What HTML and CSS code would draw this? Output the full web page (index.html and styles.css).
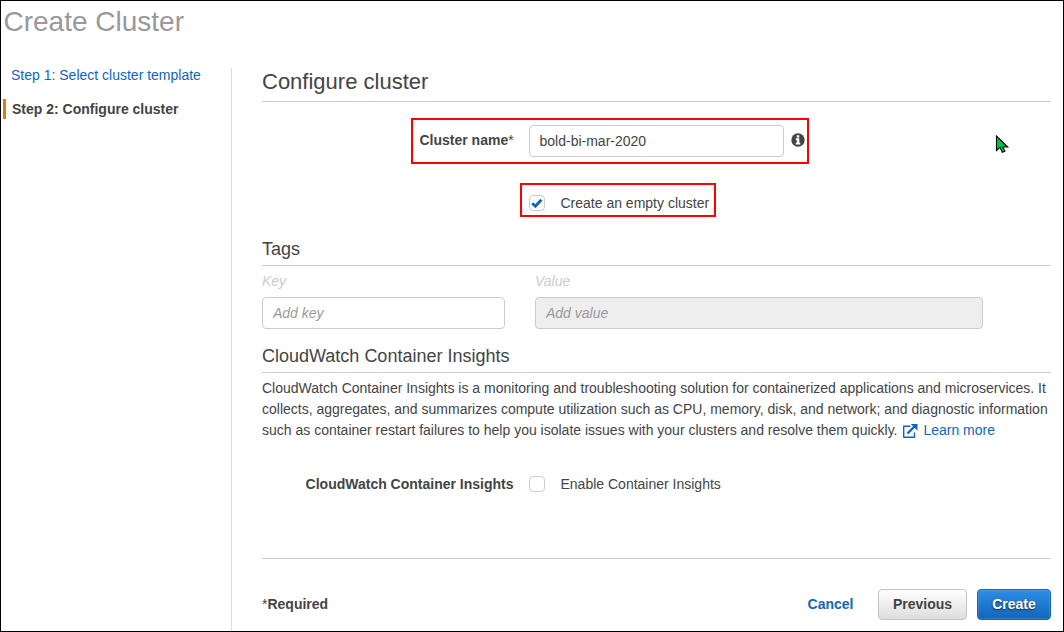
FILE: index.html
```html
<!DOCTYPE html>
<html lang="en">
<head>
<meta charset="utf-8">
<title>Create Cluster</title>
<link rel="stylesheet" href="styles.css">
</head>
<body>
<div class="page">
  <h1 class="page-title">Create Cluster</h1>
  <div class="layout">
    <nav class="steps">
      <a class="step" href="#">Step 1: Select cluster template</a>
      <span class="step step-active">Step 2: Configure cluster</span>
    </nav>
    <main class="content">
      <h2 class="heading">Configure cluster</h2>
      <div class="highlight highlight-name">
        <label class="name-label" for="name"><b>Cluster name</b>*</label>
        <input class="field name-field" id="name" type="text" value="bold-bi-mar-2020">
        <svg class="info" viewBox="0 0 14 14"><circle cx="7" cy="7" r="6.7" fill="#444"/><path d="M5.700 2.200h2.600v2.200H5.700zM4.800 5.300h3.500v4.500h1v1.600H4.800V9.800h1V6.900H4.800z" fill="#fff"/></svg>
      </div>
      <label class="highlight highlight-empty">
        <span class="checkbox"><svg class="check" viewBox="0 0 14 14"><path d="M2.200 7.300l3.200 3 6-6.500" fill="none" stroke="#1166bb" stroke-width="2.900"/></svg></span>
        <span>Create an empty cluster</span>
      </label>
      <h3 class="subheading tags-heading">Tags</h3>
      <div class="tags">
        <label class="tag-label" for="key">Key</label>
        <label class="tag-label" for="value">Value</label>
        <input class="field" id="key" type="text" placeholder="Add key">
        <input class="field" id="value" type="text" placeholder="Add value" disabled>
      </div>
      <h3 class="subheading insights-heading">CloudWatch Container Insights</h3>
      <p class="description">CloudWatch Container Insights is a monitoring and troubleshooting solution for containerized applications and microservices. It<br>collects, aggregates, and summarizes compute utilization such as CPU, memory, disk, and network; and diagnostic information<br>such as container restart failures to help you isolate issues with your clusters and resolve them quickly. <a class="learn" href="#"><svg class="external" viewBox="0 0 16 14"><path d="M8.500 2.200H1.700v11h10.800V8.500" fill="none" stroke="#1166bb" stroke-width="1.400" stroke-linejoin="round"/><path d="M5.500 9.500l7-7" stroke="#1166bb" stroke-width="2.400"/><path d="M8.800 0H15.500V6.700z" fill="#1166bb"/></svg>Learn more</a></p>
      <div class="insights-row">
        <b class="insights-label">CloudWatch Container Insights</b>
        <span class="checkbox"></span>
        <span>Enable Container Insights</span>
      </div>
      <footer class="footer">
        <span class="required">*<b>Required</b></span>
        <a class="cancel" href="#">Cancel</a>
        <button class="button">Previous</button>
        <button class="button button-primary">Create</button>
      </footer>
    </main>
  </div>
  <svg class="cursor" viewBox="0 0 15 21"><path d="M1.500 2v14.500l3.500-3.200 2.300 5 2.600-1.100-2-4.200h4.800z" fill="#00c050" stroke="#000" stroke-width="1.100"/></svg>
</div>
</body>
</html>
```
FILE: styles.css
```css
* { box-sizing: border-box; }
body {
  margin: 0;
  color: #444;
  background: #fff;
  font: 14px/21px "Liberation Sans", Arial, sans-serif;
}
h1, h2, h3, p { margin: 0; font-weight: 400; }
a { color: #1166bb; text-decoration: none; }
.page {
  position: relative;
  display: flex;
  flex-direction: column;
  width: 1064px;
  height: 632px;
  border: 1px solid #000;
  overflow: hidden;
}
.page-title {
  height: 67px;
  padding: 4px 0 0 2.5px;
  color: #999;
  font-size: 28px;
  line-height: 34px;
}
.layout { display: flex; flex: 1; }
.steps {
  display: flex;
  flex-direction: column;
  gap: 14px;
  width: 231px;
  padding: 0 0 0 2px;
  border-right: 1px solid #ddd;
  line-height: 20px;
}
.step { margin-top: -3px; padding-left: 8px; }
.step-active {
  margin-top: 0;
  padding-left: 6px;
  border-left: 3px solid #e47911;
  font-weight: 700;
}
.content {
  display: flex;
  flex-direction: column;
  width: 819px;
  padding-left: 30px;
}
.heading {
  height: 34px;
  border-bottom: 1px solid #ccc;
  font-size: 22px;
  line-height: 27px;
}
.highlight {
  display: flex;
  align-items: center;
  border: 2px solid #f00;
}
.highlight-name {
  width: 398px;
  height: 46px;
  margin: 16px 0 0 149px;
  padding-left: 6.5px;
}
.name-label { width: 109.5px; margin-top: -2px; }
.field {
  height: 32px;
  padding: 0 10px;
  border: 1px solid #ccc;
  border-radius: 4px;
  background: #fff;
  color: #444;
  font: inherit;
}
.field::placeholder { color: #999; font-style: italic; opacity: 1; }
.field:disabled { background: #eee; }
.name-field { width: 255px; padding-left: 9.5px; }
.info { width: 14px; height: 14px; margin: -2px 0 0 7px; }
.highlight-empty {
  width: 196px;
  height: 34px;
  margin: 19px 0 0 258px;
  padding: 6px 0 0 7px;
}
.checkbox {
  display: block;
  width: 16px;
  height: 16px;
  margin-right: 15.5px;
  border: 1px solid #ccc;
  border-radius: 4px;
}
.check { display: block; width: 14px; height: 14px; }
.subheading {
  border-bottom: 1px solid #ccc;
  font-size: 18px;
  line-height: 24px;
}
.tags-heading { height: 29px; margin-top: 20px; }
.tags {
  display: grid;
  grid-template-columns: 243px 448px;
  grid-template-rows: 31px 32px;
  column-gap: 30px;
}
.tag-label { padding-top: 5px; color: #ccc; font-style: italic; }
.insights-heading { height: 29px; margin-top: 15px; }
.description { padding-top: 5px; white-space: nowrap; }
.learn { margin-left: 1px; }
.external {
  width: 16px;
  height: 14px;
  margin-right: 5px;
  vertical-align: -3px;
}
.insights-row {
  display: flex;
  align-items: center;
  height: 22px;
  margin-top: 32px;
}
.insights-label { width: 251.5px; margin-right: 15.5px; text-align: right; }
.footer {
  display: flex;
  align-items: center;
  margin-top: 63px;
  padding-top: 30px;
  border-top: 1px solid #ccc;
}
.required { flex: 1; }
.cancel { margin-right: 24.5px; font-weight: 700; }
.button {
  width: 89px;
  height: 31px;
  padding: 0;
  border: 1px solid #c3c3c3;
  border-radius: 4px;
  background: linear-gradient(#fff, #ddd);
  color: #444;
  font: inherit;
  font-weight: 700;
}
.button-primary {
  width: 74px;
  margin-left: 10px;
  border-color: #1166bb;
  background: linear-gradient(#2e8de5, #1166bb);
  box-shadow: inset 0 0 0 1px rgba(255, 255, 255, .12);
  color: #fff;
  text-shadow: 0 1px 2px #222;
}
.cursor {
  position: absolute;
  left: 994px;
  top: 133px;
  width: 15px;
  height: 21px;
}
```
